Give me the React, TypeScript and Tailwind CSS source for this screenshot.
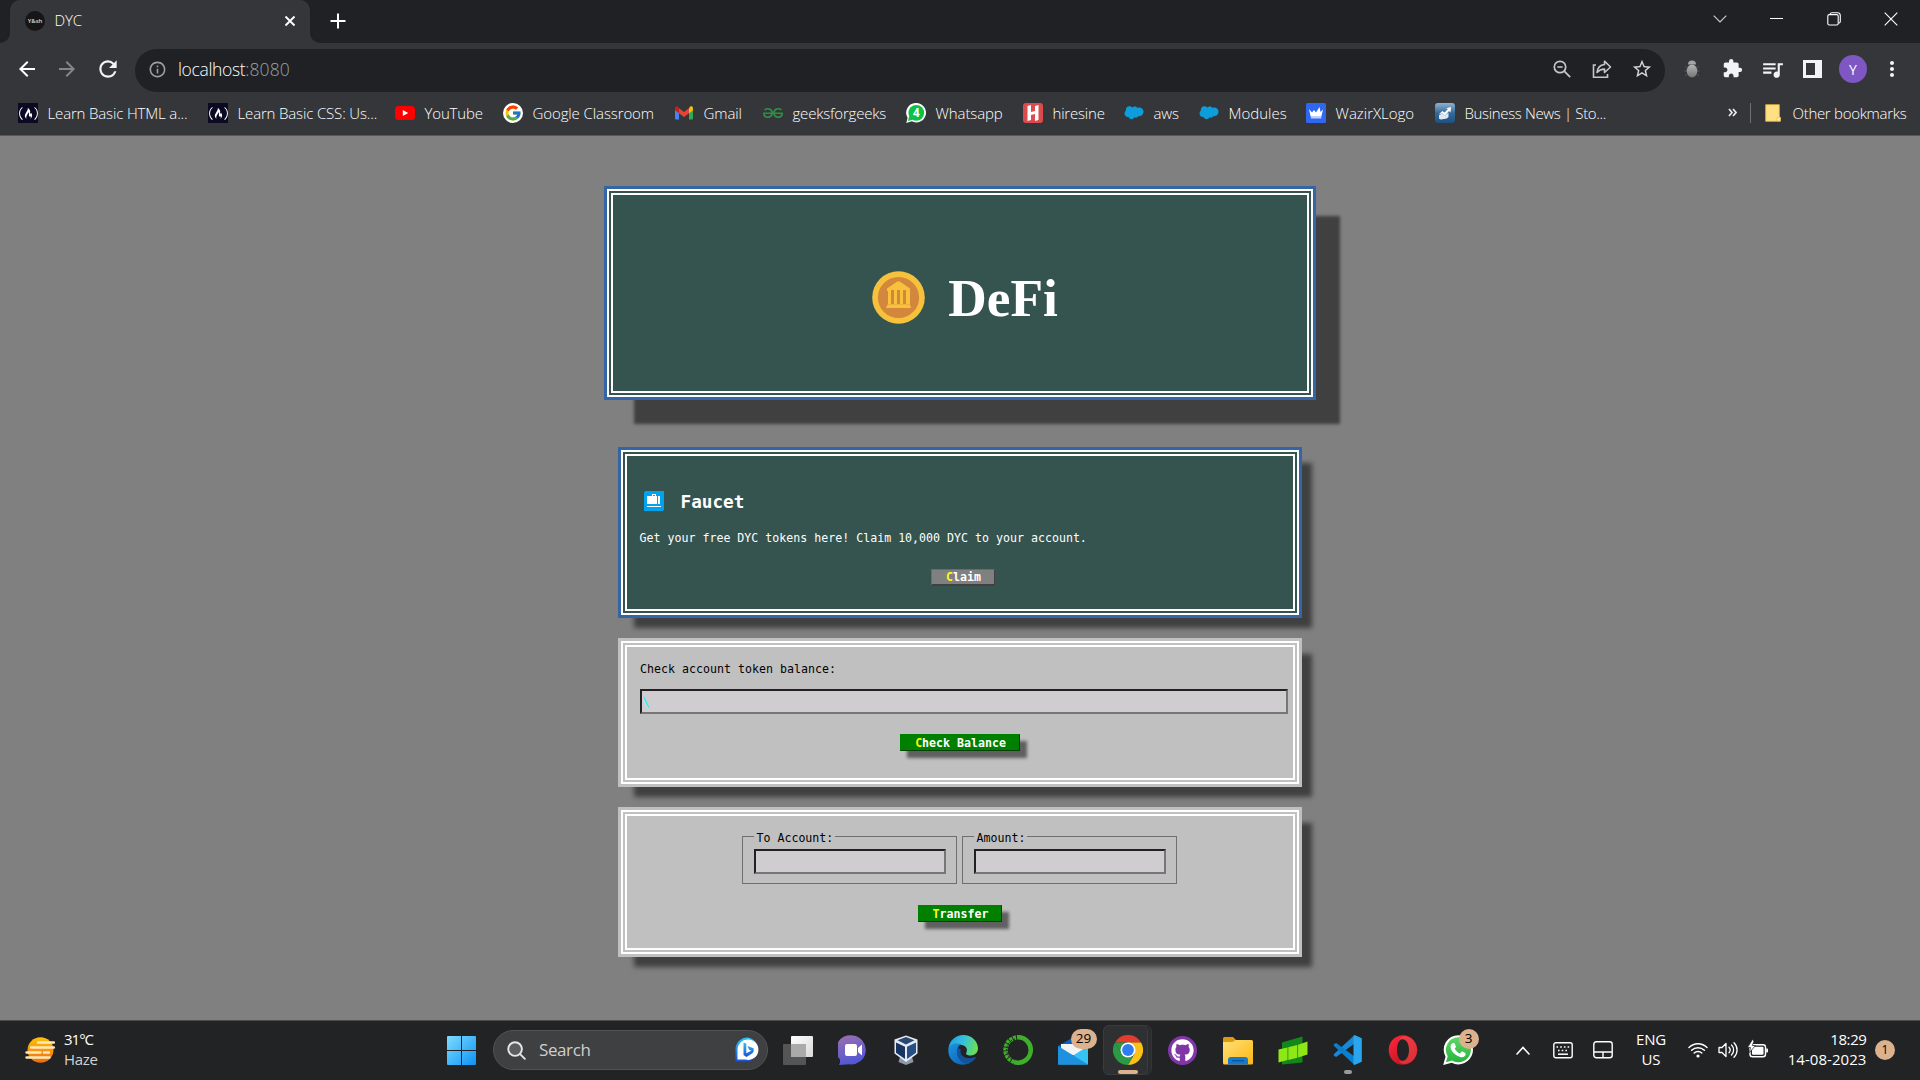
import React from 'react';
import type { ReactNode } from 'react';
import { FaFreeCodeCamp, FaGithub } from 'react-icons/fa';
import { FcGoogle } from 'react-icons/fc';
import { SiGeeksforgeeks } from 'react-icons/si';
import {
  MdArrowBack,
  MdArrowForward,
  MdExtension,
  MdInfoOutline,
  MdMoreVert,
  MdQueueMusic,
  MdRefresh,
  MdStarBorder,
} from 'react-icons/md';

function Cell({ className, children }: { className: string; children: ReactNode }) {
  return <div className={`flex shrink-0 items-center justify-center ${className}`}>{children}</div>;
}

/* ---------- Bookmark icons ---------- */

const CodeCampIcon = () => (
  <span className="flex size-5 items-center justify-center bg-[#0a0a23]">
    <FaFreeCodeCamp className="size-[19px] text-white" />
  </span>
);

const YouTubeIcon = () => (
  <svg viewBox="0 0 20 20" className="size-5">
    <rect x="0" y="3" width="20" height="14" rx="3.5" fill="#f00" />
    <path d="M7.8 7v6l5.4-3z" fill="#fff" />
  </svg>
);

const GoogleIcon = () => (
  <span className="flex size-5 items-center justify-center rounded-full bg-white">
    <FcGoogle className="size-[18px]" />
  </span>
);

const GmailIcon = () => (
  <svg viewBox="0 0 20 20" className="size-5">
    <path d="M1 6v9.5q0 1 1 1h3V9z" fill="#4285f4" />
    <path d="M19 6v9.5q0 1-1 1h-3V9z" fill="#34a853" />
    <path d="M15 5.2v5l4-3V5.3c0-2-2.1-2.4-3-1.5z" fill="#fbbc04" />
    <path d="M1 5.3v1.9l4 3v-5L4 3.8C2.5 3 1 3.7 1 5.3z" fill="#c5221f" />
    <path d="M5 5.2v5l5 3.8 5-3.8v-5L10 9z" fill="#ea4335" />
  </svg>
);

const WhatsappCountIcon = () => (
  <svg viewBox="0 0 20 20" className="size-5">
    <path d="M10.3 0a9.7 9.7 0 1 1-4.5 18.3L.3 20l1.3-5.3A9.7 9.7 0 0 1 10.3 0z" fill="#fff" />
    <circle cx="10.3" cy="9.8" r="7.9" fill="#0dc143" />
    <path d="M2 18l1.2-5 3.5 3.7z" fill="#0dc143" />
    <text x="10.3" y="14" textAnchor="middle" fontSize="11.5" fontWeight="700" fill="#fff" fontFamily="Open Sans, sans-serif">4</text>
  </svg>
);

const HiresineIcon = () => (
  <svg viewBox="0 0 20 20" className="size-5">
    <rect width="20" height="20" rx="3" fill="#d94b4e" />
    <path d="M4.500 3l3.500-1v7l4-1V3l3.500-1v15L12 18v-7l-4 1v5l-3.500 1z" fill="#fff" />
  </svg>
);

const CloudIcon = () => (
  <svg viewBox="0 0 20 20" className="size-5">
    <path d="M8.300 4.600c1.500-1.600 4-1.400 5 .3 2.900-1.200 6 .6 6.200 3.600.1 3-2.400 5.100-5 4.600-.9 1.500-2.600 1.900-4 1.200-1.200 2.600-5 2.400-5.900-.3C2 14.300.2 12.200.6 10c.1-1 .7-1.900 1.400-2.400C1 4.200 5.600 1.400 8.300 4.600z" fill="#0d9ddb" />
  </svg>
);

const WazirIcon = () => (
  <svg viewBox="0 0 20 20" className="size-5">
    <rect width="20" height="20" rx="1.5" fill="#3067f0" />
    <path d="M3 6l3 3.500L8 7l2 2.500L13.500 4l1 5L17 6.500 15.500 13h-11z" fill="#fff" />
    <path d="M4.600 13h10.800v2.500H5z" fill="#bcd0ff" />
  </svg>
);

const BusinessIcon = () => (
  <svg viewBox="0 0 20 20" className="size-5">
    <defs>
      <linearGradient id="biz" x1="0" y1="0" x2="0" y2="1">
        <stop offset="0" stopColor="#8fb3cf" />
        <stop offset="0.5" stopColor="#35699a" />
        <stop offset="1" stopColor="#1f507f" />
      </linearGradient>
    </defs>
    <rect width="20" height="20" rx="3" fill="url(#biz)" />
    <path d="M4 11l3.500-3 2 1.500L13 6l-2-.500L16 4l-.5 5.500L14 8l-4 4.500-2.500-2z" fill="#fff" />
    <path d="M4 12l3.500-1.500L10 12.500l3.500-3V14q-2 2.500-5 2-3 1-4.500-.5z" fill="#dfe9f2" />
  </svg>
);

/* ---------- Browser chrome ---------- */

const bookmarks: { label: string; box: string; track: string; icon: ReactNode }[] = [
  { label: 'Learn Basic HTML a...', box: 'w-[190px]', track: 'tracking-[-0.15px]', icon: <CodeCampIcon /> },
  { label: 'Learn Basic CSS: Us...', box: 'w-[187px]', track: 'tracking-[-0.15px]', icon: <CodeCampIcon /> },
  { label: 'YouTube', box: 'w-[108px]', track: 'tracking-[-0.15px]', icon: <YouTubeIcon /> },
  { label: 'Google Classroom', box: 'w-[171px]', track: 'tracking-[-0.1px]', icon: <GoogleIcon /> },
  { label: 'Gmail', box: 'w-[89px]', track: 'tracking-[-0.1px]', icon: <GmailIcon /> },
  { label: 'geeksforgeeks', box: 'w-[143px]', track: 'tracking-[-0.2px]', icon: <SiGeeksforgeeks className="size-5 text-[#2f8d46]" /> },
  { label: 'Whatsapp', box: 'w-[117px]', track: 'tracking-[-0.1px]', icon: <WhatsappCountIcon /> },
  { label: 'hiresine', box: 'w-[101px]', track: 'tracking-[-0.2px]', icon: <HiresineIcon /> },
  { label: 'aws', box: 'w-[75px]', track: 'tracking-[-0.2px]', icon: <CloudIcon /> },
  { label: 'Modules', box: 'w-[107px]', track: 'tracking-[0px]', icon: <CloudIcon /> },
  { label: 'WazirXLogo', box: 'w-[129px]', track: 'tracking-[0px]', icon: <WazirIcon /> },
  { label: 'Business News | Sto...', box: 'w-[180px]', track: 'tracking-[-0.35px]', icon: <BusinessIcon /> },
];

function TabStrip() {
  return (
    <div className="flex h-[43px] bg-[#202124]">
      <div className="flex w-[10px] items-end bg-[#35363a]">
        <div className="h-full w-full rounded-br-[10px] bg-[#202124]" />
      </div>
      <div className="flex w-[300px] items-center rounded-t-[10px] bg-[#35363a] pb-px pl-[15px] pr-[14px]">
        <span className="flex size-5 items-center justify-center rounded-full bg-[#161616] text-[6px] font-semibold text-neutral-300">
          Y&amp;sh
        </span>
        <span className="ml-[9.5px] flex-1 pb-[2px] text-[15px] font-light leading-5 tracking-[-0.1px] text-white">DYC</span>
        <svg viewBox="0 0 12 12" className="size-3" fill="none" stroke="#fff" strokeWidth="1.9">
          <path d="M1.500 1.500l9 9M10.500 1.500l-9 9" />
        </svg>
      </div>
      <div className="flex w-[10px] bg-[#35363a]">
        <div className="h-full w-full rounded-bl-[10px] bg-[#202124]" />
      </div>
      <svg viewBox="0 0 16 16" className="ml-[9.5px] mt-[13px] size-4" stroke="#fff" strokeWidth="2">
        <path d="M8 .5v15M.5 8h15" />
      </svg>
      <div className="ml-auto mr-px flex h-[37px]">
        <Cell className="w-[57px]">
          <svg viewBox="0 0 14 8" className="h-2 w-[14px]" fill="none" stroke="#d0d0d0" strokeWidth="1.1">
            <path d="M.7.7L7 7l6.300-6.300" />
          </svg>
        </Cell>
        <Cell className="w-[57px]">
          <div className="h-px w-[13px] bg-white" />
        </Cell>
        <Cell className="w-[57px]">
          <svg viewBox="0 0 14 14" className="size-[14px]" fill="none" stroke="#fff" strokeWidth="1.1">
            <rect x=".8" y="2.6" width="10.4" height="10.4" rx="1.5" />
            <path d="M3 2.300Q3.200.7 5 .7h5.500q2.800 0 2.800 2.800V9.500q0 1.300-1.700 1.800" />
          </svg>
        </Cell>
        <Cell className="w-[57px]">
          <svg viewBox="0 0 14 14" className="size-[14px]" fill="none" stroke="#fff" strokeWidth="1.1">
            <path d="M.7.7l12.600 12.600M13.300.7L.7 13.300" />
          </svg>
        </Cell>
      </div>
    </div>
  );
}

function Toolbar() {
  return (
    <div className="flex h-[52px] items-center pl-[7px]">
      <Cell className="w-10"><MdArrowBack className="size-6 text-white" /></Cell>
      <Cell className="w-10"><MdArrowForward className="size-6 text-[#85868a]" /></Cell>
      <Cell className="w-12 pr-[7px]"><MdRefresh className="size-[26px] text-[#f1f3f4]" /></Cell>
      <div className="relative top-px flex h-[43px] w-[1530px] items-center rounded-full bg-[#202124] pb-[2px] pl-[13px] pr-[3px]">
        <MdInfoOutline className="size-[19px] text-[#9aa0a6]" />
        <div className="ml-[11px] flex flex-1 text-[17.5px] font-light leading-6 text-white">
          <span className="tracking-[-0.35px]">localhost</span>
          <span className="tracking-[0.1px] text-[#9aa0a6]">:8080</span>
        </div>
        <Cell className="w-10">
          <svg viewBox="0 0 18 18" className="size-[18px]" fill="none" stroke="#c4c7ca" strokeWidth="1.7">
            <circle cx="7" cy="7" r="5.7" />
            <path d="M11.200 11.200l6 6M4.300 7h5.400" />
          </svg>
        </Cell>
        <Cell className="w-10">
          <svg viewBox="0 0 20 20" className="size-5" fill="none" stroke="#c4c7ca" strokeWidth="1.6">
            <path d="M4 6H1.500v12.200h14V15" />
            <path d="M5 13.500c.5-5 3.200-7.500 7.500-8V2.200L18.500 8l-6 5.500v-3.400c-3-.1-5.200.8-7.500 3.400z" strokeLinejoin="round" />
          </svg>
        </Cell>
        <Cell className="w-10"><MdStarBorder className="size-[22px] text-[#d3d5d8]" /></Cell>
      </div>
      <Cell className="ml-[7px] w-10">
        <svg viewBox="0 0 18 18" className="size-[18px]">
          <defs>
            <linearGradient id="bug" x1="0" y1="0" x2="0" y2="1">
              <stop offset="0" stopColor="#b5b5b5" />
              <stop offset="1" stopColor="#747474" />
            </linearGradient>
          </defs>
          <path d="M2 6l3 2.500M16 6l-3 2.500M1.500 11H5M13 11h3.500M2 16l3-2.500M16 16l-3-2.500" stroke="#55565a" />
          <ellipse cx="9" cy="11" rx="5.3" ry="6.5" fill="url(#bug)" />
          <path d="M5 4.500a4 4 0 0 1 8 0z" fill="#a5a5a5" />
        </svg>
      </Cell>
      <Cell className="w-10 pb-px"><MdExtension className="size-[21px] text-[#f1f3f4]" /></Cell>
      <Cell className="w-10"><MdQueueMusic className="size-[25px] text-[#f1f3f4]" /></Cell>
      <Cell className="w-10">
        <div className="h-[18px] w-[19px] border-[3px] border-r-[7px] border-[#f1f3f4]" />
      </Cell>
      <Cell className="w-10">
        <div className="relative left-px flex size-7 items-center justify-center rounded-full bg-[#7e57c2] text-[14px] font-medium text-white">Y</div>
      </Cell>
      <Cell className="w-10"><MdMoreVert className="size-6 text-[#f1f3f4]" /></Cell>
    </div>
  );
}

function BookmarksBar() {
  return (
    <div className="flex h-[41px] items-center border-b border-[#56575a] pb-[4px] pl-[18px] text-[15px] font-light leading-5 text-white">
      {bookmarks.map((b) => (
        <div key={b.label} className={`flex shrink-0 items-center gap-[9.5px] whitespace-nowrap ${b.box}`}>
          {b.icon}
          <span className={`pb-px ${b.track}`}>{b.label}</span>
        </div>
      ))}
      <svg viewBox="0 0 9 9" className="ml-[112.5px] mt-[-1px] size-[9px]" fill="none" stroke="#e8eaed" strokeWidth="1.7">
        <path d="M1 1l3 3.500L1 8M5 1l3 3.500L5 8" />
      </svg>
      <div className="ml-[13px] h-5 w-px bg-[#6f7074]" />
      <svg viewBox="0 0 16 18" className="ml-[14px] h-[18px] w-4">
        <path d="M.7.7h13.600v11.600l1 1v4H.7z" fill="#ffe082" stroke="#e8b931" strokeWidth=".8" />
        <path d="M12 17v-3.500h3.300V17z" fill="#fff0b5" stroke="#e8b931" strokeWidth=".6" />
      </svg>
      <span className="ml-[12px] whitespace-nowrap pb-px tracking-[-0.3px]">Other bookmarks</span>
    </div>
  );
}

/* ---------- DeFi page ---------- */

function CoinIcon() {
  return (
    <svg viewBox="0 0 53 53" className="size-[53px]">
      <circle cx="26.5" cy="26.5" r="26.3" fill="#f7c13b" />
      <circle cx="26.5" cy="26.5" r="20.6" fill="#d3873d" />
      <path d="M15 17.500L24.500 11q2-1.300 4 0L38 17.500V20H15z" fill="#f7c13b" />
      <path d="M16 19h22v14.500H16z" fill="#f7c13b" />
      <path d="M15.500 33.500h22.500l1 3.500H14z" fill="#f7c13b" />
      <path d="M19 19h3v14h-3zM25 19h3v14h-3zM31 19h3v14h-3z" fill="#d3873d" />
    </svg>
  );
}

function LuggageIcon() {
  return (
    <svg viewBox="0 0 20 20" className="size-5" shapeRendering="crispEdges">
      <rect width="20" height="20" rx="2" fill="#00a4ee" />
      <path d="M3 5h5V3h4v2h1v8H3zM9 4v1h2V4zM14 5h2v8h-2zM3 15h14v1H3z" fill="#fff" fillRule="evenodd" />
    </svg>
  );
}

function HotLabel({ text }: { text: string }) {
  return (
    <span className="pl-px font-bold text-white">
      <span className="text-[#ff0]">{text[0]}</span>
      {text.slice(1)}
    </span>
  );
}

function Field({ label, gap }: { label: string; gap: string }) {
  return (
    <fieldset className="relative h-12 w-[215px] border border-[#6f6f6f] pl-[11px] pt-[12px]">
      <legend className={`absolute left-[11px] top-[-7px] h-4 bg-[#c0c0c0] pl-[2.5px] leading-4 ${gap}`}>{label}</legend>
      <input className="block h-[25px] w-[192px] border-2 border-b-[#767676] border-l-[#212121] border-r-[#767676] border-t-[#212121] bg-[#d0cdd0] outline-none" />
    </fieldset>
  );
}

function DefiPage() {
  return (
    <main className="flex h-[884px] flex-col items-center bg-[#808080] font-['DejaVu_Sans_Mono',monospace] text-[11.6px]">
      <header className="mt-[53px] flex h-[208px] w-[706px] items-center justify-center gap-[23px] border-[6px] border-double border-white bg-[#355450] pl-[10px] pt-[8px] shadow-[27px_27px_3px_rgba(0,0,0,0.5)] outline-[3px] outline-solid outline-[#3465a4]">
        <CoinIcon />
        <h1 className="pt-[2px] font-['Liberation_Serif',serif] text-[53.33px] font-bold leading-[53px] text-white">DeFi</h1>
      </header>

      <section className="mt-[53px] flex h-[165px] w-[678px] flex-col border-[6px] border-double border-white bg-[#355450] pl-[12px] pt-[35px] text-white shadow-[13px_13px_5px_rgba(0,0,0,0.5)] outline-[3px] outline-solid outline-[#3465a4]">
        <div className="flex h-5 items-center gap-[16.5px] pl-[5px]">
          <LuggageIcon />
          <h2 className="pt-[2px] text-[17.7px] font-bold leading-5">Faucet</h2>
        </div>
        <p className="mt-[19px] pl-[0.5px] leading-4 tracking-[0.01px]">Get your free DYC tokens here! Claim 10,000 DYC to your account.</p>
        <button className="ml-[292px] mt-[23px] flex h-[17px] w-16 items-center justify-center border border-b-2 border-b-[#404040] border-l-[#6b6b6b] border-r-[#404040] border-t-[#6b6b6b] bg-[#808080] leading-4">
          <HotLabel text="Claim" />
        </button>
      </section>

      <section className="mt-[26px] flex h-[143px] w-[678px] flex-col border-[6px] border-double border-white bg-[#c0c0c0] pl-[13px] pr-[5px] pt-[14px] text-black shadow-[13px_13px_5px_rgba(0,0,0,0.5)] outline-[3px] outline-solid outline-[#c0c0c0]">
        <label className="leading-4 tracking-[0.02px]">Check account token balance:</label>
        <input
          defaultValue={'\\'}
          className="mt-[12px] h-[25px] w-[648px] border-2 border-b-[#767676] border-l-[#212121] border-r-[#767676] border-t-[#212121] bg-[#d0cdd0] text-[13px] text-[#0ff] outline-none"
        />
        <button className="ml-[260px] mt-[20px] flex h-[17px] w-[120px] items-center justify-center border border-b-[#004000] border-l-[#008000] border-r-[#004000] border-t-[#008000] bg-[#008000] leading-4 shadow-[7px_7px_3px_rgba(0,0,0,0.5)]">
          <HotLabel text="Check Balance" />
        </button>
      </section>

      <section className="mt-[26px] flex h-[144px] w-[678px] flex-col border-[6px] border-double border-white bg-[#c0c0c0] pt-[20px] text-black shadow-[13px_13px_5px_rgba(0,0,0,0.5)] outline-[3px] outline-solid outline-[#c0c0c0]">
        <div className="ml-[115px] flex gap-[5px]">
          <Field label="To Account:" gap="w-[81px]" />
          <Field label="Amount:" gap="w-[53px]" />
        </div>
        <button className="ml-[291px] mt-[21px] flex h-[17px] w-[84px] items-center justify-center border border-b-[#004000] border-l-[#008000] border-r-[#004000] border-t-[#008000] bg-[#008000] leading-4 shadow-[7px_7px_3px_rgba(0,0,0,0.5)]">
          <HotLabel text="Transfer" />
        </button>
      </section>
    </main>
  );
}

/* ---------- Taskbar icons ---------- */

function Gradients() {
  return (
    <svg className="absolute size-0">
      <defs>
        <linearGradient id="sun" x1="0" y1="0" x2="0" y2="1">
          <stop offset="0" stopColor="#ffc20a" />
          <stop offset="1" stopColor="#ee6a10" />
        </linearGradient>
        <linearGradient id="win" x1="0" y1="0" x2="1" y2="1">
          <stop offset="0" stopColor="#7fdcff" />
          <stop offset="1" stopColor="#0c92f5" />
        </linearGradient>
        <linearGradient id="bing" x1="0" y1="0" x2="0" y2="1">
          <stop offset="0" stopColor="#2fc3f2" />
          <stop offset="1" stopColor="#1a4fd6" />
        </linearGradient>
        <linearGradient id="front" x1="0" y1="0" x2="1" y2="1">
          <stop offset="0" stopColor="#fff" />
          <stop offset="1" stopColor="#d8d8d8" />
        </linearGradient>
        <linearGradient id="chat" x1="0.2" y1="0" x2="0.5" y2="1">
          <stop offset="0" stopColor="#9a6fae" />
          <stop offset="1" stopColor="#4f56d8" />
        </linearGradient>
        <linearGradient id="edgeTop" x1="0" y1="0.3" x2="1" y2="0.5">
          <stop offset="0" stopColor="#1f9fe0" />
          <stop offset="0.5" stopColor="#35c2dc" />
          <stop offset="1" stopColor="#6de04f" />
        </linearGradient>
        <linearGradient id="edgeBody" x1="0" y1="0" x2="1" y2="1">
          <stop offset="0" stopColor="#1b95e0" />
          <stop offset="1" stopColor="#0b5cb5" />
        </linearGradient>
        <linearGradient id="folder" x1="0" y1="0" x2="1" y2="1">
          <stop offset="0" stopColor="#ffe07a" />
          <stop offset="1" stopColor="#fbb80f" />
        </linearGradient>
        <linearGradient id="opera" x1="0" y1="0" x2="1" y2="1">
          <stop offset="0" stopColor="#ff2a3c" />
          <stop offset="1" stopColor="#b00a16" />
        </linearGradient>
        <linearGradient id="wa" x1="0" y1="0" x2="0" y2="1">
          <stop offset="0" stopColor="#5fd668" />
          <stop offset="1" stopColor="#27b43e" />
        </linearGradient>
      </defs>
    </svg>
  );
}

const WeatherIcon = () => (
  <svg viewBox="0 0 30 26" className="h-[26px] w-[30px]">
    <ellipse cx="15.5" cy="13" rx="13" ry="12.8" fill="url(#sun)" />
    <g stroke="#ffe9b8" strokeWidth="2.4" strokeLinecap="round">
      <path d="M13 5.500h16M6 10.500h23M1.500 15.500h14M19 15.500h5M1.500 20.500h23" />
    </g>
  </svg>
);

const WindowsIcon = () => (
  <svg viewBox="0 0 29 29" className="size-[29px]">
    <path d="M0 1q0-1 1-1h13v14H0zM15 0h13q1 0 1 1v13H15zM0 15h14v14H1q-1 0-1-1zM15 15h14v13q0 1-1 1H15z" fill="url(#win)" />
  </svg>
);

const BingIcon = () => (
  <svg viewBox="0 0 26 26" className="size-[26px]">
    <path d="M13.500.5a12 12 0 1 1-3 24H1.500V12a12 12 0 0 1 12-11.500z" fill="url(#bing)" />
    <path d="M13.500 2.500a10.200 10.200 0 1 1-2 20H3.500V12.500a10 10 0 0 1 10-10z" fill="#fff" />
    <path d="M9.500 5.500l2.800 1v9.800l5-2.600-2.300-1.200-1.500-3.500 6 2.300q1 3.700-1.500 5.200L12.500 20l-3-2z" fill="url(#bing)" />
  </svg>
);

const TaskViewIcon = () => (
  <svg viewBox="0 0 30 30" className="size-[30px]">
    <rect x="8" y="1" width="22" height="21" rx="1" fill="url(#front)" />
    <rect x="0" y="9" width="23" height="21" rx="1" fill="#5b5b5b" fillOpacity=".9" />
    <rect x="8" y="9" width="15" height="13" fill="#aaa" />
  </svg>
);

const ChatIcon = () => (
  <svg viewBox="0 0 30 30" className="size-[30px]">
    <path d="M15 .5A14.300 14.300 0 1 1 11.500 29.300L1 30q1.500-2.500 1-5.500A14.300 14.300 0 0 1 15 .5z" fill="url(#chat)" />
    <rect x="7" y="9" width="12" height="12" rx="2" fill="#fff" />
    <path d="M20 13l4-3.500V20.500L20 17z" fill="#fff" />
  </svg>
);

const VirtualBoxIcon = () => (
  <svg viewBox="0 0 30 30" className="relative left-[-2px] size-[30px]">
    <path d="M9 22h12l1.500 5-7.500 3-7.500-3z" fill="#8d98a8" />
    <path d="M15 .5l11.500 4V18.500L15 27 3.500 18.500V4.500z" fill="#e6ebf2" />
    <path d="M15 2l8.500 3.200L15 9.500 6.500 5.200z" fill="#2a4675" />
    <path d="M5 7.500l9 4.300V24L5 17.800z" fill="#16345f" />
    <path d="M25 7.500l-9 4.300V24l9-6.200z" fill="#264f87" />
  </svg>
);

const EdgeIcon = () => (
  <svg viewBox="0 0 30 30" className="size-[30px]">
    <path d="M.5 13C1.500 5.500 7.700 0 15.200 0 23.500 0 30 6 30 13.300c0 4.500-3.400 7.200-7.200 7.200-3.700 0-5.300-1.300-4.500-2.700 1.500-2.600.6-6.800-4.300-7.800C8 8.700 2.500 10.500.5 13z" fill="url(#edgeTop)" />
    <path d="M.5 13C2.500 9 8.500 7.500 13 9.300c-4 2-5 8.200-2.300 13 2.400 4.300 8.300 6.300 11.300 5.700C13.500 32.500.3 28 .3 15.500z" fill="url(#edgeBody)" />
    <path d="M10 13c-3.500 7.500 2.500 15 9.500 15.800 4-.8 7-3.800 8.300-6 .3-.7-.3-1-1-.7-8 3.500-15.800-1.100-14-7.500z" fill="#14539a" />
  </svg>
);

const AnacondaIcon = () => (
  <svg viewBox="0 0 30 30" className="size-[30px]" fill="none" stroke="#3fae2b">
    <path d="M14 2.300A12.700 12.700 0 1 1 11 27" strokeWidth="4.6" />
    <path d="M13 2.500A12.700 12.700 0 0 0 11 27" strokeWidth="4.4" strokeDasharray="3 0.8" />
    <path d="M12 4A11.300 11.300 0 0 0 9.500 24.800" strokeWidth="1" stroke="#222324" strokeDasharray="2 1.4" />
  </svg>
);

const MailIcon = () => (
  <svg viewBox="0 0 30 30" className="size-[30px]">
    <path d="M0 11L13 3.500q2-1.200 4 0L30 11v8H0z" fill="#0f5fb8" />
    <path d="M3 9h24v11H3z" fill="#f3f3f3" />
    <path d="M30 11v18.500H0L16 20z" fill="#35c3f3" />
    <path d="M0 11l30 18.500H0z" fill="#1e90e0" />
  </svg>
);

const ChromeIcon = () => (
  <svg viewBox="0 0 30 30" className="size-[30px]">
    <path d="M2 7.500A15 15 0 0 1 28 7.500H15z" fill="#e33b2e" />
    <path d="M28 7.500A15 15 0 0 1 15 30L21.500 18.700 15 7.500z" fill="#fbc116" />
    <path d="M15 30A15 15 0 0 1 2 7.500L8.500 18.700 15 22.500l5-1z" fill="#2a9a45" />
    <path d="M2 7.500L8.500 18.700 15 7.500z" fill="#2a9a45" />
    <circle cx="15" cy="15" r="7.5" fill="#fff" />
    <circle cx="15" cy="15" r="5.9" fill="#2f7df0" />
  </svg>
);

const GithubIcon = () => (
  <span className="flex size-[29px] items-center justify-center rounded-full bg-[#8136a8]">
    <FaGithub className="size-[23px] text-white" />
  </span>
);

const FolderIcon = () => (
  <svg viewBox="0 0 30 30" className="size-[30px]">
    <path d="M0 3.500q0-1.500 1.500-1.500h8.500l3 3V9H0z" fill="#dd9a10" />
    <path d="M0 7h9.500l3-2H28.500Q30 5 30 6.500V28q0 1.500-1.500 1.500h-27Q0 29.500 0 28z" fill="url(#folder)" />
    <path d="M5 29.500V25q0-3 3-3h14q3 0 3 3v4.500z" fill="#1678cf" />
    <path d="M9 25.800h12" stroke="#0d4f94" strokeWidth="1.2" />
  </svg>
);

const GreenBarsIcon = () => (
  <svg viewBox="0 0 30 30" className="size-[30px]">
    <path d="M4 7.500L24.500 1.500v26L4 29.500z" fill="#12881a" />
    <path d="M.5 14.500l9-2v12.500l-9 2.500zM10.300 12.300l9-2.300v12.700l-9 2.300zM20.100 9.700L29.500 6.500V19.500l-9.400 3z" fill="#8fe815" />
  </svg>
);

const VSCodeIcon = () => (
  <svg viewBox="0 0 30 30" className="size-[30px]">
    <path d="M21.500 8.500V0L.8 19.200v1.500L3.200 22z" fill="#1689d8" />
    <path d="M21.500 21.500V30L.8 10.800V9.300L3.200 8z" fill="#0a7fd0" />
    <path d="M21.500 0l7.300 3.300v23.400L21.500 30l-1-.8V1z" fill="#2aa6f0" />
  </svg>
);

const OperaIcon = () => (
  <svg viewBox="0 0 30 30" className="size-[30px]">
    <path fillRule="evenodd" d="M15 .2c8 0 14.300 6.500 14.300 14.800S23 29.800 15 29.800.7 23.300.7 15 7 .2 15 .2zm0 4c-3.700 0-6 4.500-6 10.800s2.300 10.800 6 10.800 6-4.500 6-10.800-2.300-10.800-6-10.800z" fill="url(#opera)" />
    <path d="M17 1c7 1 12.200 7 12.200 14S24 28.500 17 29c-2.500.2-5-1-6-3.300 1 .5 2.500.7 4 .2 4-1.200 6-5.500 6-10.900S19 5.500 15 4.200c-2-.5-3 0-4 .3C12.500 2 14.500.8 17 1z" fill="#ff5a5a" fillOpacity=".45" />
  </svg>
);

const WhatsappIcon = () => (
  <svg viewBox="0 0 30 30" className="size-[30px]">
    <path d="M15.300.2a14.600 14.600 0 1 1-6.600 27.600L.2 30l2.300-8.200A14.600 14.600 0 0 1 15.300.2z" fill="#fff" />
    <path d="M15.300 2.300a12.500 12.500 0 1 1-6.200 23.300L3 27.200l1.700-6A12.500 12.500 0 0 1 15.300 2.300z" fill="url(#wa)" />
    <path d="M10.600 8c.8 0 1 .2 1.300 1l1 2.400c.2.600-.9 1.700-1.200 2.100 1.200 2.500 3 4 5.300 5l1.600-1.900c.4-.3.700-.2 1 0l2.600 1.300c.6.500.5 1.500.2 2.300-.8 1.800-3.200 2.400-5.200 1.700-4.500-1.500-8.500-5-9.500-9C7.300 10.300 8.600 8 10.600 8z" fill="#fff" />
  </svg>
);

function Badge({ text, className }: { text: string; className: string }) {
  return (
    <span className={`absolute flex h-5 items-center justify-center rounded-full bg-[#dcb18d] text-[13.5px] leading-5 text-black ${className}`}>
      <span className="relative top-[-1px]">{text}</span>
    </span>
  );
}

/* ---------- Taskbar ---------- */

function Taskbar() {
  return (
    <footer className="flex h-[60px] items-center border-t border-[#4a4b4c] bg-[#222324] pb-px text-white">
      <Gradients />
      <div className="flex w-[447px] items-center pl-[25px]">
        <WeatherIcon />
        <div className="relative top-[-1px] ml-[9px] text-[15px] leading-5">
          <div className="tracking-[-1px]">31°C</div>
          <div className="tracking-[-0.3px] text-[#d2d2d2]">Haze</div>
        </div>
      </div>
      <WindowsIcon />
      <div className="ml-[17px] flex h-10 w-[275px] items-center rounded-full border border-[#515253] bg-[#3f4041] pl-[13px] pr-[7px]">
        <svg viewBox="0 0 20 20" className="size-[19px]" fill="none" stroke="#e6e6e6" strokeWidth="2">
          <circle cx="8.5" cy="8.5" r="7.2" fill="#5c5d5e" />
          <path d="M13.800 13.800l5 5" strokeLinecap="round" />
        </svg>
        <span className="ml-[13px] flex-1 text-[17px] leading-6 tracking-[-0.4px] text-[#cfcfcf]">Search</span>
        <BingIcon />
      </div>

      <div className="ml-[2.5px] flex h-full items-center">
        <Cell className="w-[55px]"><TaskViewIcon /></Cell>
        <Cell className="w-[55px]"><ChatIcon /></Cell>
        <Cell className="w-[55px]"><VirtualBoxIcon /></Cell>
        <Cell className="w-[55px]"><EdgeIcon /></Cell>
        <Cell className="w-[55px]"><AnacondaIcon /></Cell>
        <Cell className="relative w-[55px]">
          <MailIcon />
          <Badge text="29" className="left-[25px] top-[-6px] w-[26px]" />
        </Cell>
        <Cell className="relative h-[50px] w-[55px]">
          <div className="absolute left-[2.5px] top-0 h-full w-[49px] rounded-[6px] border border-[#343536] bg-[#2b2c2d]" />
          <div className="absolute left-[2.5px] top-0 h-full w-[45px] rounded-[6px] border border-[#3a3b3c] bg-[#2f3031]" />
          <div className="relative"><ChromeIcon /></div>
          <div className="absolute bottom-[1px] left-[17px] h-1 w-5 rounded-full bg-[#dcb18d]" />
        </Cell>
        <Cell className="w-[55px]"><span className="relative left-[-1px]"><GithubIcon /></span></Cell>
        <Cell className="w-[55px]"><FolderIcon /></Cell>
        <Cell className="w-[55px]"><GreenBarsIcon /></Cell>
        <Cell className="relative h-[50px] w-[55px]">
          <VSCodeIcon />
          <div className="absolute bottom-[1px] left-[23px] h-1 w-2 rounded-full bg-[#9a9a9a]" />
        </Cell>
        <Cell className="w-[55px]"><OperaIcon /></Cell>
        <Cell className="relative w-[55px]">
          <WhatsappIcon />
          <Badge text="3" className="left-[28px] top-[-6px] w-5" />
        </Cell>
      </div>

      <div className="ml-[17.5px] flex items-center">
        <Cell className="w-10">
          <svg viewBox="0 0 14 9" className="h-[9px] w-[14px]" fill="none" stroke="#fff" strokeWidth="1.6" strokeLinecap="round">
            <path d="M1 8l6-6.500L13 8" />
          </svg>
        </Cell>
        <Cell className="w-10">
          <svg viewBox="0 0 20 17" className="h-[17px] w-5" fill="none" stroke="#fff" strokeWidth="1.4">
            <rect x=".8" y=".8" width="18.4" height="15" rx="2" />
            <path d="M3.500 5h13M5 8.500h11" strokeDasharray="1.6 2.1" strokeWidth="1.7" />
            <path d="M5 12.200h10" strokeWidth="1.5" />
          </svg>
        </Cell>
        <Cell className="w-10">
          <svg viewBox="0 0 20 18" className="h-[18px] w-5" fill="none" stroke="#fff" strokeWidth="1.4">
            <rect x=".8" y=".8" width="18.4" height="16" rx="2.5" />
            <path d="M1 11h18M10 11v6" />
          </svg>
        </Cell>
        <div className="relative top-[-1px] w-14 text-center text-[15px] leading-5">
          <div className="tracking-[-0.2px]">ENG</div>
          <div>US</div>
        </div>
        <Cell className="ml-1 w-[30px]">
          <svg viewBox="0 0 20 18" className="h-[18px] w-5" fill="none" stroke="#fff" strokeWidth="1.5" strokeLinecap="round">
            <path d="M1 6.500a12.700 12.700 0 0 1 18 0M3.600 9.300a9 9 0 0 1 12.800 0M6.200 12a5.400 5.400 0 0 1 7.600 0" />
            <circle cx="10" cy="15" r="1.6" fill="#fff" stroke="none" />
          </svg>
        </Cell>
        <Cell className="w-[30px]">
          <svg viewBox="0 0 20 18" className="h-[18px] w-5" fill="none" stroke="#fff" strokeWidth="1.3" strokeLinecap="round" strokeLinejoin="round">
            <path d="M1 6.500h3L8 2.500v13L4 11.500H1z" />
            <path d="M11 6.300a4 4 0 0 1 0 5.400M13.500 4a7 7 0 0 1 0 10M16 1.800a10 10 0 0 1 0 14.400" />
          </svg>
        </Cell>
        <Cell className="w-[30px]">
          <svg viewBox="0 0 20 18" className="h-[18px] w-5 overflow-visible">
            <rect x="2" y="3.8" width="15.5" height="12" rx="2.5" fill="none" stroke="#fff" strokeWidth="1.4" />
            <rect x="4" y="5.8" width="11.5" height="8" rx="1" fill="#fff" />
            <path d="M18.200 7.500h1q.8 0 .8 1v2q0 1-.8 1h-1z" fill="#fff" />
            <path d="M4.500-1.500L-.5 6.500h3L1.500 11.500 7.500 4.500H4.300L6 0z" fill="#fff" stroke="#222324" strokeWidth=".7" />
          </svg>
        </Cell>
        <div className="relative top-[-1px] w-[93.5px] text-right text-[15px] leading-5">
          <div className="tracking-[-0.4px]">18:29</div>
          <div className="tracking-[0.05px]">14-08-2023</div>
        </div>
        <div className="ml-[8.5px] flex size-5 items-center justify-center rounded-full bg-[#dcb18d] text-[12px] text-black">1</div>
      </div>
    </footer>
  );
}

export default function App() {
  return (
    <div className="h-[1080px] w-[1920px] overflow-hidden bg-[#808080] font-['Open_Sans','Noto_Sans',sans-serif]">
      <div className="h-[136px] bg-[#35363a]">
        <TabStrip />
        <Toolbar />
        <BookmarksBar />
      </div>
      <DefiPage />
      <Taskbar />
    </div>
  );
}
